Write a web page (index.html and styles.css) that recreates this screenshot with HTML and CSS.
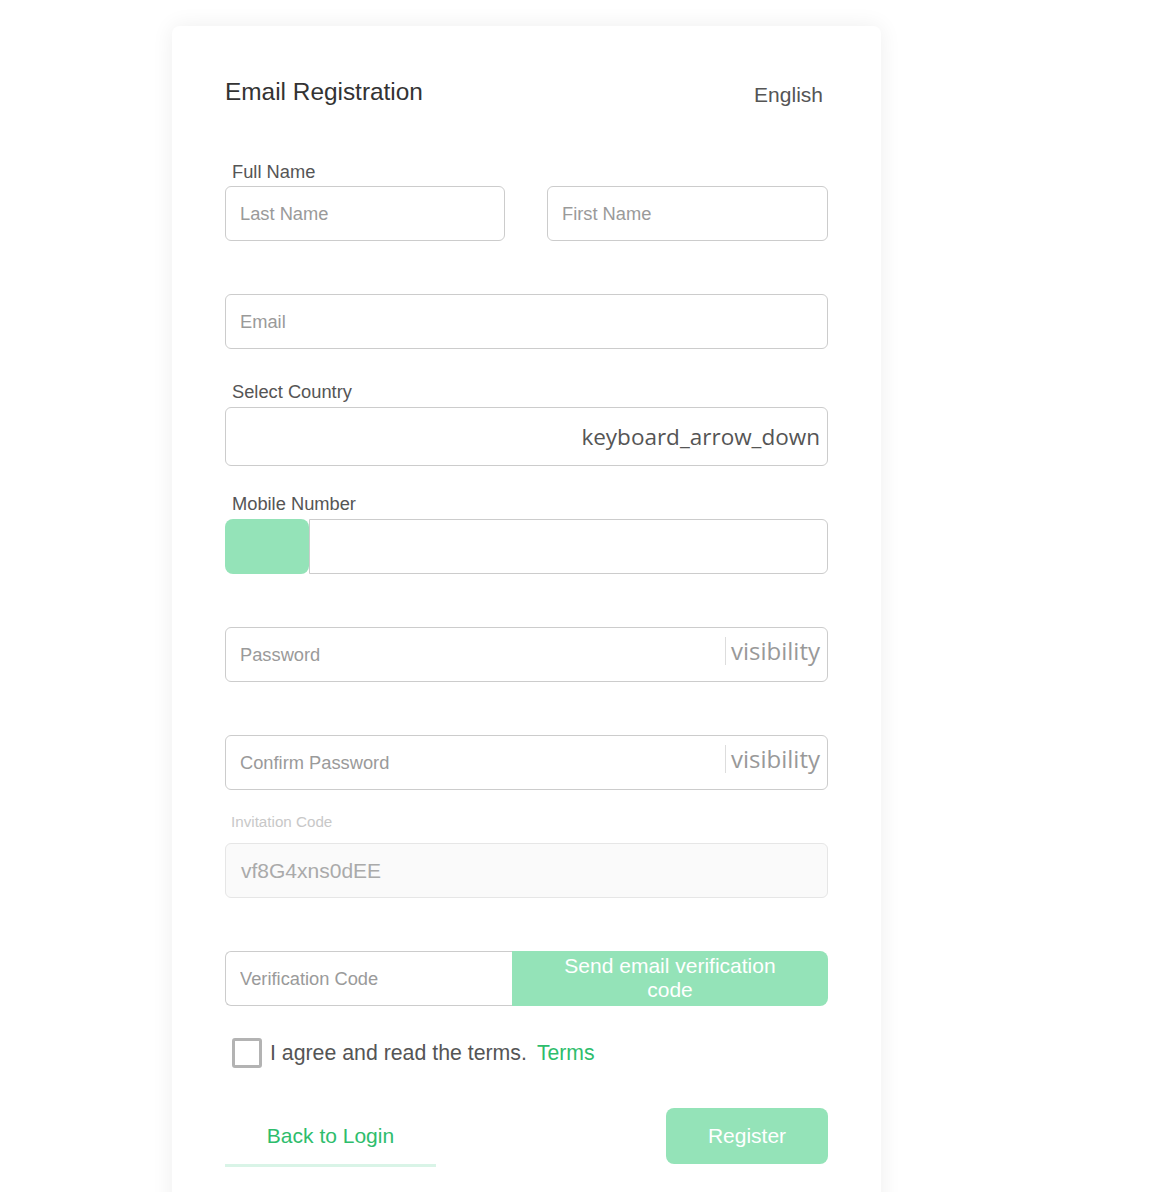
FILE: index.html
```html
<!DOCTYPE html>
<html lang="en">
<head>
<meta charset="utf-8">
<title>Email Registration</title>
<link rel="stylesheet" href="styles.css">
</head>
<body>
<div class="page">
  <div class="card">
    <div class="header">
      <h1 class="title">Email Registration</h1>
      <div class="lang">English</div>
    </div>

    <div class="group g-name">
      <label class="label">Full Name</label>
      <div class="name-row">
        <input class="input" type="text" placeholder="Last Name">
        <input class="input" type="text" placeholder="First Name">
      </div>
    </div>

    <div class="group g-email">
      <input class="input" type="text" placeholder="Email">
    </div>

    <div class="group g-country">
      <label class="label">Select Country</label>
      <div class="select">
        <span class="ligature dark">keyboard_arrow_down</span>
      </div>
    </div>

    <div class="group g-mobile">
      <label class="label">Mobile Number</label>
      <div class="mobile-row">
        <div class="code"></div>
        <input class="input mobile-input" type="text">
      </div>
    </div>

    <div class="group g-pass">
      <div class="pass-box">
        <input class="pass-input" type="password" placeholder="Password">
        <span class="ligature eye">visibility</span>
      </div>
    </div>

    <div class="group g-pass">
      <div class="pass-box">
        <input class="pass-input" type="password" placeholder="Confirm Password">
        <span class="ligature eye">visibility</span>
      </div>
    </div>

    <div class="group g-invite">
      <label class="label small">Invitation Code</label>
      <div class="invite">vf8G4xns0dEE</div>
    </div>

    <div class="group g-verify">
      <div class="verify-row">
        <input class="input verify-input" type="text" placeholder="Verification Code">
        <button class="send-btn" type="button">Send email verification<br>code</button>
      </div>
    </div>

    <div class="agree">
      <span class="checkbox"></span>
      <span class="agree-text">I agree and read the terms.</span>
      <a class="terms" href="#">Terms</a>
    </div>

    <div class="actions">
      <a class="back" href="#">Back to Login</a>
      <button class="register" type="button">Register</button>
    </div>
  </div>
</div>
</body>
</html>
```
FILE: styles.css
```css
* { box-sizing: border-box; }

html, body {
  margin: 0;
  padding: 0;
  background: #ffffff;
  font-family: "Liberation Sans", Arial, sans-serif;
  overflow: hidden;
}

.page {
  padding: 26px 0 0 172px;
}

.card {
  width: 709px;
  min-height: 1250px;
  background: #ffffff;
  border-radius: 8px;
  box-shadow: 0 0 22px rgba(0, 0, 0, 0.07);
  padding: 51px 53px 0 53px;
}

.header {
  display: flex;
  justify-content: space-between;
  align-items: flex-start;
}

.title {
  margin: 0;
  font-size: 24.4px;
  line-height: 30px;
  font-weight: normal;
  color: #333333;
}

.lang {
  font-size: 21px;
  line-height: 30px;
  padding-top: 3px;
  margin-right: 5px;
  color: #555555;
}

.group { display: flex; flex-direction: column; }

.label {
  display: block;
  font-size: 18.3px;
  line-height: 20px;
  color: #555555;
  padding-left: 7px;
  margin-bottom: 5px;
}

.label.small {
  font-size: 15.2px;
  color: #c8c8c8;
  padding-left: 6px;
  margin-bottom: 11px;
}

.g-name { margin-top: 52px; }
.g-name .label { margin-bottom: 4px; }
.g-email { margin-top: 53px; }
.g-country { margin-top: 33px; }
.g-country .label { margin-bottom: 5px; }
.g-mobile { margin-top: 28px; }
.g-pass { margin-top: 53px; }
.g-invite { margin-top: 22px; }
.g-verify { margin-top: 53px; }

.input {
  height: 55px;
  width: 100%;
  border: 1px solid #cccccc;
  border-radius: 6px;
  padding: 0 14px;
  font-family: "Liberation Sans", Arial, sans-serif;
  font-size: 18.3px;
  color: #333333;
  background: #ffffff;
  outline: none;
}

.input::placeholder,
.pass-input::placeholder { color: #9a9a9a; }

.name-row {
  display: grid;
  grid-template-columns: 280px 281px;
  justify-content: space-between;
}

.select {
  height: 59px;
  border: 1px solid #cccccc;
  border-radius: 6px;
  display: flex;
  align-items: center;
  justify-content: flex-end;
  padding-right: 7px;
}

.ligature {
  font-family: "Open Sans", "Noto Sans", sans-serif;
  font-size: 22.5px;
  line-height: 28px;
}

.dark { color: #555555; }

.mobile-row {
  display: flex;
  height: 55px;
}

.code {
  width: 84px;
  flex: none;
  background: #94e3b8;
  border-radius: 8px;
}

.mobile-input {
  flex: 1;
  border-radius: 0 6px 6px 0;
}

.pass-box {
  height: 55px;
  border: 1px solid #cccccc;
  border-radius: 6px;
  display: flex;
  align-items: center;
  padding: 0 7px 0 14px;
}

.pass-input {
  flex: 1;
  border: none;
  outline: none;
  height: 100%;
  padding: 0;
  font-family: "Liberation Sans", Arial, sans-serif;
  font-size: 18.3px;
  background: transparent;
}

.eye {
  font-size: 24px;
  color: #999999;
  border-left: 1px solid #dddddd;
  padding-left: 5px;
  margin-bottom: 7px;
}

.invite {
  height: 55px;
  border: 1px solid #e6e6e6;
  border-radius: 6px;
  background: #fafafa;
  display: flex;
  align-items: center;
  padding-left: 15px;
  font-size: 21px;
  color: #aaaaaa;
}

.verify-row {
  display: flex;
  height: 55px;
}

.verify-input {
  width: 287px;
  flex: none;
  border-radius: 6px 0 0 6px;
  border-right: none;
}

.send-btn {
  flex: 1;
  border: none;
  background: #94e3b8;
  color: #ffffff;
  font-family: "Liberation Sans", Arial, sans-serif;
  font-size: 21px;
  line-height: 24px;
  border-radius: 0 8px 8px 0;
  padding: 0 0 2px 0;
}

.agree {
  display: flex;
  align-items: center;
  margin-top: 32px;
  padding-left: 7px;
  height: 30px;
}

.checkbox {
  width: 30px;
  height: 30px;
  border: 3px solid #b3b3b3;
  border-radius: 3px;
  flex: none;
}

.agree-text {
  margin-left: 8px;
  font-size: 21.3px;
  color: #555555;
}

.terms {
  margin-left: 10px;
  font-size: 21.2px;
  color: #2ebd6c;
  text-decoration: none;
}

.actions {
  display: flex;
  justify-content: space-between;
  align-items: flex-start;
  margin-top: 40px;
}

.back {
  width: 211px;
  height: 59px;
  display: flex;
  align-items: center;
  justify-content: center;
  font-size: 21px;
  color: #2ebd6c;
  text-decoration: none;
  border-bottom: 3px solid #d9f4e7;
}

.register {
  width: 162px;
  height: 56px;
  border: none;
  border-radius: 8px;
  background: #94e3b8;
  color: #ffffff;
  font-family: "Liberation Sans", Arial, sans-serif;
  font-size: 21px;
}
```
